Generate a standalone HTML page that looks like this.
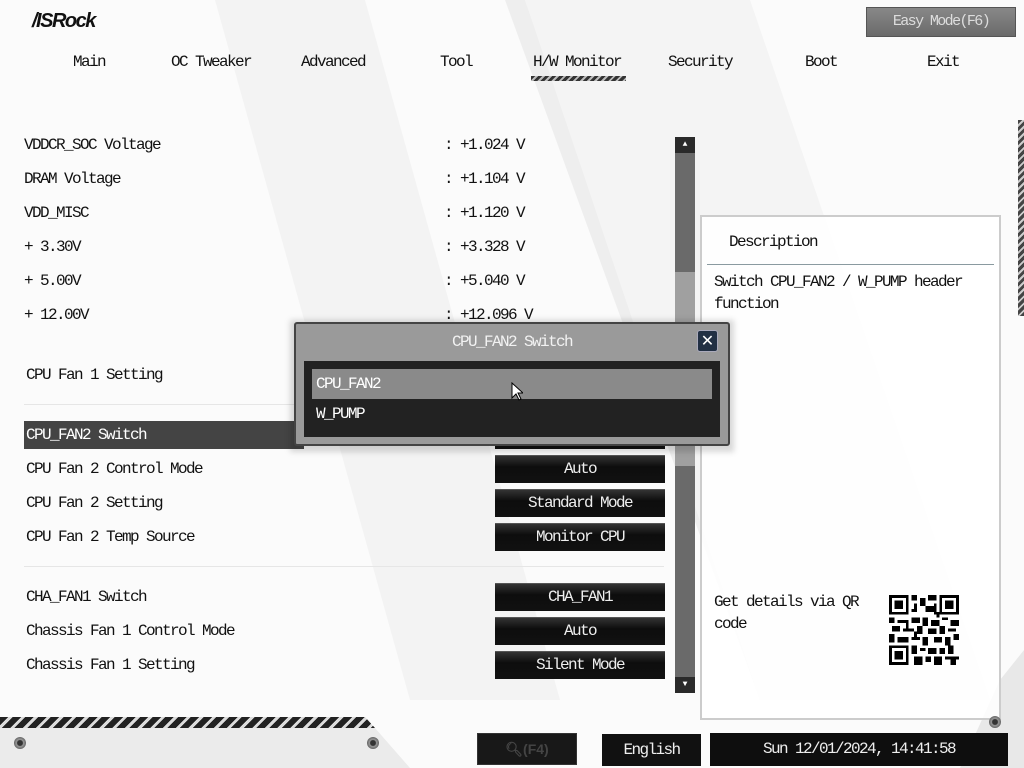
<!DOCTYPE html>
<html><head><meta charset="utf-8"><style>
*{margin:0;padding:0;box-sizing:border-box}
body{width:1024px;height:768px;overflow:hidden;position:relative;background:#fbfbfb;font-family:"Liberation Mono",monospace;font-size:16px;letter-spacing:-1.6px;color:#111}
.a{position:absolute;white-space:nowrap}
.t{margin-top:1px}
.btn{position:absolute;left:495px;width:170px;height:28px;background:linear-gradient(#333,#0d0d0d 40%,#111);color:#eee;text-align:center;line-height:27px;border-top:1px solid #555}
.sep{position:absolute;left:24px;width:640px;height:1px;background:#e6e6e6}
</style></head><body>
<svg class="a" style="left:0;top:0" width="1024" height="768">
<polygon points="215,0 365,0 560,700 410,700" fill="#f3f3f3"/>
<polygon points="505,0 525,0 780,700 760,700" fill="#eeeeee"/>
<polygon points="525,0 750,0 990,700 760,700" fill="#f4f4f4"/>
<polygon points="0,728 375,728 410,768 0,768" fill="#ebebeb"/>
<polygon points="1000,680 1024,650 1024,768 960,768" fill="#e8e8e8"/>
</svg>
<div class="a" style="left:32px;top:10px;font-family:'Liberation Sans',sans-serif;font-weight:bold;font-style:italic;font-size:20px;letter-spacing:-1.5px;color:#111">/ISRock</div>
<div class="a" style="left:866px;top:7px;width:150px;height:30px;background:linear-gradient(#888,#6a6a6a);border:1px solid #555;color:#ddd;text-align:center;line-height:28px;font-size:15px">Easy Mode(F6)</div>
<div class="a t" style="top:52px;left:73px">Main</div>
<div class="a t" style="top:52px;left:171px">OC Tweaker</div>
<div class="a t" style="top:52px;left:301px">Advanced</div>
<div class="a t" style="top:52px;left:440px">Tool</div>
<div class="a t" style="top:52px;left:533px">H/W Monitor</div>
<div class="a t" style="top:52px;left:668px">Security</div>
<div class="a t" style="top:52px;left:805px">Boot</div>
<div class="a t" style="top:52px;left:927px">Exit</div>
<div class="a" style="left:531px;top:76px;width:95px;height:5px;background:repeating-linear-gradient(135deg,#333 0 3px,#bbb 3px 5px)"></div>
<div class="a" style="left:1018px;top:120px;width:6px;height:196px;background:repeating-linear-gradient(135deg,#444 0 3px,#ccc 3px 5px)"></div>

<div class="a t" style="left:24px;top:135px">VDDCR_SOC Voltage</div><div class="a t" style="left:444px;top:135px">: +1.024 V</div>
<div class="a t" style="left:24px;top:169px">DRAM Voltage</div><div class="a t" style="left:444px;top:169px">: +1.104 V</div>
<div class="a t" style="left:24px;top:203px">VDD_MISC</div><div class="a t" style="left:444px;top:203px">: +1.120 V</div>
<div class="a t" style="left:24px;top:237px">+ 3.30V</div><div class="a t" style="left:444px;top:237px">: +3.328 V</div>
<div class="a t" style="left:24px;top:271px">+ 5.00V</div><div class="a t" style="left:444px;top:271px">: +5.040 V</div>
<div class="a t" style="left:24px;top:305px">+ 12.00V</div><div class="a t" style="left:444px;top:305px">: +12.096 V</div>
<div class="a t" style="left:26px;top:365px">CPU Fan 1 Setting</div>
<div class="sep" style="top:404px"></div>
<div class="a" style="left:24px;top:421px;width:280px;height:28px;background:#444"></div>
<div class="a t" style="left:26px;top:425px;color:#fff">CPU_FAN2 Switch</div>
<div class="a t" style="left:26px;top:459px">CPU Fan 2 Control Mode</div>
<div class="a t" style="left:26px;top:493px">CPU Fan 2 Setting</div>
<div class="a t" style="left:26px;top:527px">CPU Fan 2 Temp Source</div>
<div class="sep" style="top:566px"></div>
<div class="a t" style="left:26px;top:587px">CHA_FAN1 Switch</div>
<div class="a t" style="left:26px;top:621px">Chassis Fan 1 Control Mode</div>
<div class="a t" style="left:26px;top:655px">Chassis Fan 1 Setting</div>
<div class="btn" style="top:421px">CPU_FAN2</div>
<div class="btn" style="top:455px">Auto</div>
<div class="btn" style="top:489px">Standard Mode</div>
<div class="btn" style="top:523px">Monitor CPU</div>
<div class="btn" style="top:583px">CHA_FAN1</div>
<div class="btn" style="top:617px">Auto</div>
<div class="btn" style="top:651px">Silent Mode</div>

<div class="a" style="left:675px;top:137px;width:20px;height:556px;background:#6a6a6a"></div>
<div class="a" style="left:675px;top:272px;width:20px;height:194px;background:#a0a0a0"></div>
<div class="a" style="left:675px;top:137px;width:20px;height:16px;background:#2a2a2a;color:#fff;font-size:8px;text-align:center;line-height:16px;letter-spacing:0">▲</div>
<div class="a" style="left:675px;top:677px;width:20px;height:16px;background:#2a2a2a;color:#fff;font-size:8px;text-align:center;line-height:16px;letter-spacing:0">▼</div>

<div class="a" style="left:700px;top:215px;width:301px;height:505px;border:2px solid #ccc;background:rgba(255,255,255,.85)"></div>
<div class="a t" style="left:729px;top:232px">Description</div>
<div class="a" style="left:707px;top:264px;width:287px;height:1px;background:#8a9aa0"></div>
<div class="a t" style="left:714px;top:272px">Switch CPU_FAN2 / W_PUMP header</div>
<div class="a t" style="left:714px;top:294px">function</div>
<div class="a t" style="left:714px;top:592px">Get details via QR</div>
<div class="a t" style="left:714px;top:614px">code</div>
<svg class="a" style="left:889px;top:595px" width="70" height="70" viewBox="0 0 25 25" shape-rendering="crispEdges">
<rect width="25" height="25" fill="#fff"/>
<g fill="#000"><path d="M0 0h7v7H0zM18 0h7v7h-7zM0 18h7v7H0z"/></g>
<g fill="#fff"><path d="M1 1h5v5H1zM19 1h5v5h-5zM1 19h5v5H1z"/></g>
<g fill="#000"><path d="M2 2h3v3H2zM20 2h3v3h-3zM2 20h3v3H2z"/>
<path d="M8 0h2v2H8zM11 1h2v3h-2zM14 0h3v2h-3zM9 3h1v3H9zM13 4h3v2h-3zM8 8h3v2H8zM0 8h2v2H0zM3 9h3v1H3zM12 8h2v3h-2zM15 9h3v2h-3zM19 8h2v1h-2zM22 9h3v2h-3zM1 11h3v2H1zM5 12h4v1H5zM10 11h2v3h-2zM14 12h3v2h-3zM18 11h2v3h-2zM21 12h3v1h-3zM0 14h2v3H0zM3 15h4v2H3zM8 15h3v1H8zM12 15h2v3h-2zM16 15h3v2h-3zM20 15h2v3h-2zM23 14h2v2h-2zM8 18h2v3H8zM11 19h2v1h-2zM14 19h3v2h-3zM18 19h2v2h-2zM21 18h2v3h-2zM9 22h3v3H9zM13 22h2v2h-2zM16 22h3v3h-3zM20 22h5v1h-5zM22 23h2v2h-2zM16 3h1v4h-1zM8 5h1v1H8zM6 9h1v3H6zM9 13h1v2H9zM17 6h1v2h-1zM10 23h1v2h-1z"/></g>
</svg>

<div class="a" style="left:0;top:717px;width:375px;height:11px;background:repeating-linear-gradient(135deg,#222 0 6px,#ddd 6px 9px);clip-path:polygon(0 0,365px 0,375px 100%,0 100%)"></div>
<div class="a" style="left:14px;top:737px;width:12px;height:12px;border-radius:50%;background:radial-gradient(#333 30%,#999 40%,#666 70%)"></div>
<div class="a" style="left:367px;top:737px;width:12px;height:12px;border-radius:50%;background:radial-gradient(#333 30%,#999 40%,#666 70%)"></div>
<div class="a" style="left:989px;top:716px;width:12px;height:12px;border-radius:50%;background:radial-gradient(#333 30%,#999 40%,#666 70%)"></div>

<div class="a" style="left:477px;top:733px;width:100px;height:32px;background:#181818;border:1px solid #333;color:#444;text-align:center;line-height:30px;font-family:'Liberation Sans',sans-serif;font-weight:bold;font-size:14px;letter-spacing:0">&#x1F50D;&#xFE0E;(F4)</div>
<div class="a t" style="left:602px;top:733px;width:99px;height:32px;background:#111;color:#eee;text-align:center;line-height:32px">English</div>
<div class="a t" style="left:710px;top:732px;width:298px;height:33px;background:#0e0e0e;color:#eee;text-align:center;line-height:33px">Sun 12/01/2024, 14:41:58</div>

<div class="a" style="left:290px;top:320px;width:444px;height:132px;background:rgba(0,0,0,.15);filter:blur(3px)"></div>
<div class="a" style="left:294px;top:322px;width:436px;height:124px;background:#9a9a9a;border:2px solid #444;border-radius:3px"></div>
<div class="a t" style="left:294px;top:332px;width:436px;text-align:center;color:#f2f2f2">CPU_FAN2 Switch</div>
<div class="a" style="left:697px;top:330px;width:21px;height:22px;background:#223044;border:1px solid #aab;border-radius:3px;color:#fff;text-align:center;line-height:20px;font-family:'DejaVu Sans',sans-serif;font-weight:bold;font-size:16px;letter-spacing:0">✕</div>
<div class="a" style="left:304px;top:361px;width:416px;height:76px;background:#222"></div>
<div class="a" style="left:312px;top:369px;width:400px;height:30px;background:#8a8a8a"></div>
<div class="a t" style="left:316px;top:374px;color:#fff">CPU_FAN2</div>
<div class="a t" style="left:316px;top:404px;color:#fff">W_PUMP</div>
<svg class="a" style="left:511px;top:382px" width="12" height="20" viewBox="0 0 12 20"><path d="M1 1v15l4-4 3 6 2-1-3-6h5z" fill="#fff" stroke="#000" stroke-width="1"/></svg>
</body></html>
